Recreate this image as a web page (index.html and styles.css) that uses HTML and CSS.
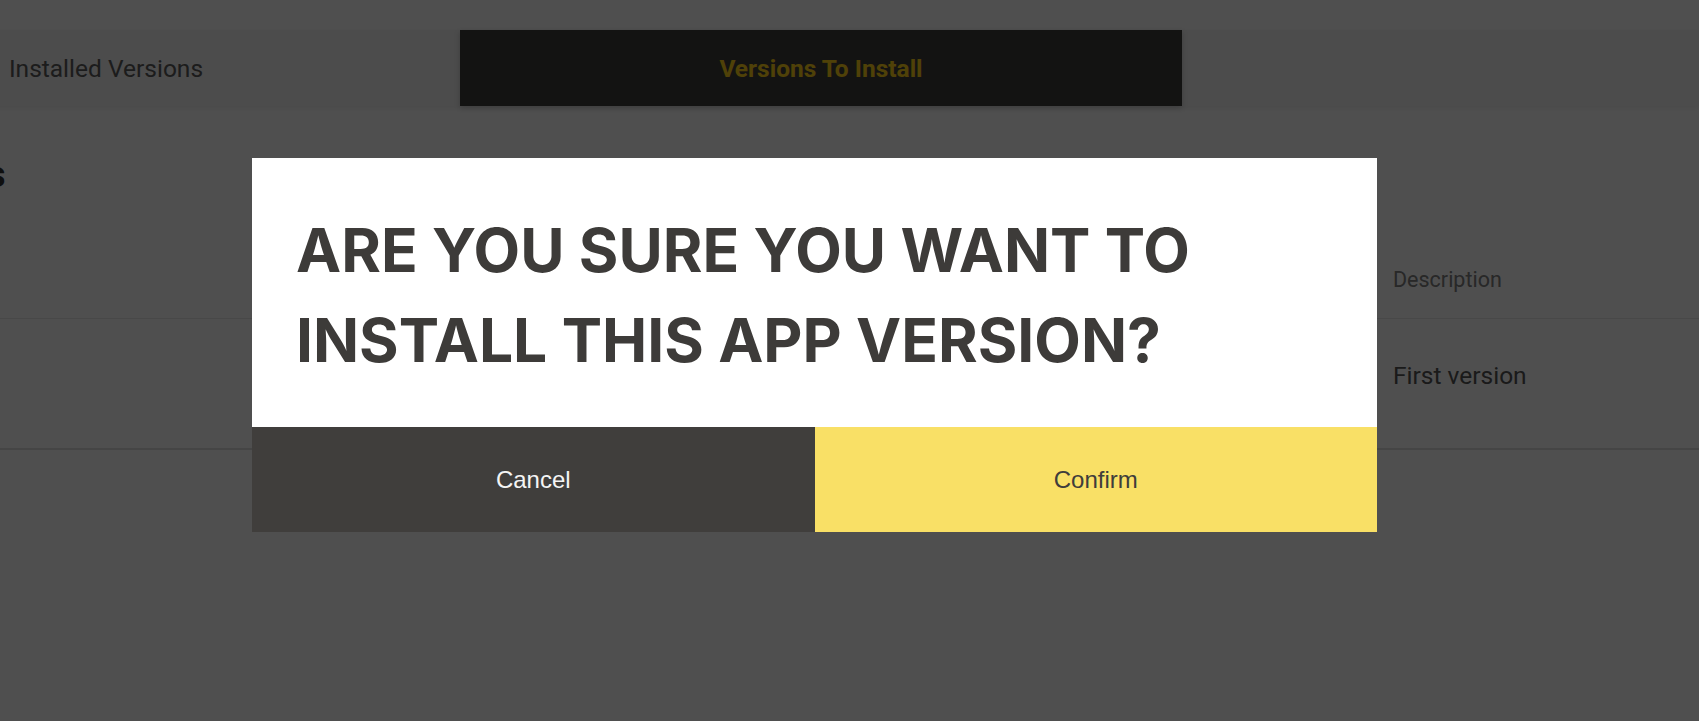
FILE: index.html
```html
<!DOCTYPE html>
<html>
<head>
    <title>App Versions</title>
    <link rel="stylesheet" href="styles.css">
</head>
<body>
    <div class="page">
        <nav class="tabs">
            <button class="tab tabFirst">Installed Versions</button>
            <button class="tab tabActive">Versions To Install</button>
        </nav>

        <main class="content">
            <h2 class="sectionTitle">App Versions</h2>
            <table class="versionTable">
                <thead>
                    <tr>
                        <th class="colSelect"></th>
                        <th class="colVersion">Version</th>
                        <th class="colDate">Release Date</th>
                        <th class="colDesc">Description</th>
                    </tr>
                </thead>
                <tbody>
                    <tr>
                        <td class="colSelect"></td>
                        <td class="colVersion">1.0.0</td>
                        <td class="colDate">2023-01-01</td>
                        <td class="colDesc">First version</td>
                    </tr>
                </tbody>
            </table>
        </main>
    </div>

    <div class="overlay">
        <div class="modal">
            <h1 class="modalTitle">Are you sure you want to install this app version?</h1>
            <div class="modalActions">
                <button class="modalBtn btnCancel">Cancel</button>
                <button class="modalBtn btnConfirm">Confirm</button>
            </div>
        </div>
    </div>
</body>
</html>
```

FILE: styles.css
```css
body {
    font-family: Roboto, 'Liberation Sans', sans-serif;
    background-color: #fff;
    margin: 0;
    padding: 0;
    overflow: hidden;
}

.page {
    margin-left: -262px;
    width: 1961px;
}

.tabs {
    display: flex;
    margin-top: 30px;
    height: 76px;
    background-color: #f4f4f4;
    box-shadow: 0 2px 6px rgba(0, 0, 0, 0.08);
}

.tab {
    width: 722px;
    border: none;
    background: transparent;
    font-family: Roboto, sans-serif;
    font-size: 24.5px;
    color: #5c5c5c;
    padding: 0;
}

.tabFirst {
    padding-left: 14px;
}

.tabActive {
    background-color: #3f3d3b;
    color: #ffd21a;
    font-weight: 700;
    box-shadow: 0 2px 6px rgba(0, 0, 0, 0.2);
}

.content {
    padding-top: 45px;
}

.sectionTitle {
    margin: 0;
    padding-left: 52px;
    font-size: 36px;
    font-weight: 700;
    color: #333;
    height: 48px;
    line-height: 48px;
}

.versionTable {
    width: 100%;
    border-collapse: collapse;
    margin-top: 28px;
}

.versionTable th {
    text-align: left;
    font-weight: 400;
    font-size: 21.5px;
    color: #808080;
    padding: 40px 0 26px;
    border-bottom: 1px solid #e8e8e8;
}

.versionTable td {
    font-size: 24.5px;
    color: #555;
    padding: 42px 0 58px;
    border-bottom: 2px solid #ddd;
}

.colSelect {
    width: 560px;
}

.colVersion {
    width: 500px;
}

.colDate {
    width: 595px;
}

.overlay {
    position: fixed;
    inset: 0;
    background-color: rgba(0, 0, 0, 0.69);
    padding: 158px 0 0 252px;
}

.modal {
    width: 1125px;
    background-color: #fff;
}

.modalTitle {
    margin: 0;
    padding: 47px 44px 42px;
    font-family: Inter, Roboto, sans-serif;
    font-size: 60.5px;
    line-height: 90px;
    font-weight: 700;
    text-transform: uppercase;
    color: #3d3b39;
}

.modalActions {
    display: flex;
    height: 105px;
}

.modalBtn {
    flex: 1;
    border: none;
    font-family: 'Liberation Sans', Arial, sans-serif;
    font-size: 24px;
    cursor: pointer;
}

.btnCancel {
    background-color: #403e3c;
    color: #f4f4f4;
}

.btnConfirm {
    background-color: #f9e066;
    color: #3f3d3b;
}
```
